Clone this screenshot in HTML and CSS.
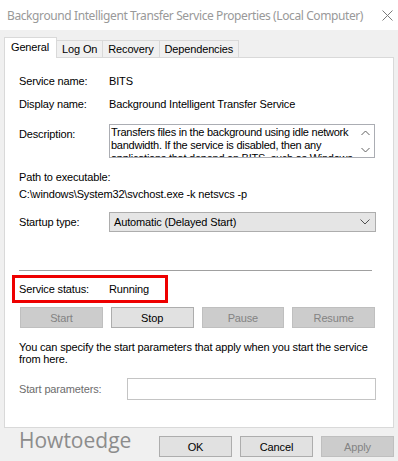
FILE: index.html
```html
<!DOCTYPE html>
<html lang="en">
<head>
    <meta charset="UTF-8">
    <title>Background Intelligent Transfer Service Properties (Local Computer)</title>
    <link rel="stylesheet" href="styles.css">
</head>
<body>
    <div class="window">
        <div class="titlebar">
            <span class="title">Background Intelligent Transfer Service Properties (Local Computer)</span>
            <svg class="close" width="11" height="11" viewBox="0 0 11 11">
                <path d="M0.5 0.5L10.5 10.5M10.5 0.5L0.5 10.5" stroke="#7a7a7a" stroke-width="1" fill="none"/>
            </svg>
        </div>

        <div class="tabs">
            <div class="tab active">General</div>
            <div class="tab">Log On</div>
            <div class="tab">Recovery</div>
            <div class="tab">Dependencies</div>
        </div>

        <div class="panel">
            <div class="row">
                <span class="label">Service name:</span>
                <span>BITS</span>
            </div>
            <div class="row row-gap">
                <span class="label">Display name:</span>
                <span>Background Intelligent Transfer Service</span>
            </div>
            <div class="row row-desc">
                <span class="label label-desc">Description:</span>
                <div class="textbox">
                    <div class="textbox-text">Transfers files in the background using idle network<br>bandwidth. If the service is disabled, then any<br>applications that depend on BITS, such as Windows</div>
                    <div class="scroll">
                        <svg width="9" height="6" viewBox="0 0 9 6"><path d="M0.5 5L4.5 1L8.5 5" stroke="#606060" fill="none"/></svg>
                        <svg width="9" height="6" viewBox="0 0 9 6"><path d="M0.5 1L4.5 5L8.5 1" stroke="#606060" fill="none"/></svg>
                    </div>
                </div>
            </div>

            <div class="path-label">Path to executable:</div>
            <div class="path">C:\windows\System32\svchost.exe -k netsvcs -p</div>

            <div class="row row-startup">
                <span class="label">Startup type:</span>
                <div class="combo">
                    <span>Automatic (Delayed Start)</span>
                    <svg width="10" height="6" viewBox="0 0 10 6"><path d="M0.5 0.5L5 5L9.5 0.5" stroke="#505050" fill="none"/></svg>
                </div>
            </div>

            <div class="separator"></div>

            <div class="row status">
                <span class="label">Service status:</span>
                <span>Running</span>
            </div>

            <div class="service-buttons">
                <button class="btn" disabled>Start</button>
                <button class="btn">Stop</button>
                <button class="btn" disabled>Pause</button>
                <button class="btn" disabled>Resume</button>
            </div>

            <p class="hint">You can specify the start parameters that apply when you start the service<br>from here.</p>

            <div class="row row-params">
                <span class="label label-params">Start parameters:</span>
                <div class="param-input"></div>
            </div>
        </div>

        <div class="footer">
            <span class="watermark">Howtoedge</span>
            <div class="footer-buttons">
                <button class="btn">OK</button>
                <button class="btn">Cancel</button>
                <button class="btn" disabled>Apply</button>
            </div>
        </div>
    </div>
</body>
</html>
```

FILE: styles.css
```css
* {
    box-sizing: border-box;
}

body {
    margin: 0;
    background-color: #f0f0f0;
    color: #000;
    font-family: "Liberation Sans", Arial, sans-serif;
    font-size: 11px;
    letter-spacing: -0.15px;
}

.window {
    width: 398px;
    height: 461px;
    overflow: hidden;
}

/* Title bar */
.titlebar {
    height: 30px;
    background-color: #fff;
    display: flex;
    align-items: center;
    padding: 0 5px 0 7px;
}

.title {
    font-family: "Noto Sans", sans-serif;
    font-size: 12px;
    letter-spacing: -0.4px;
    color: #999;
    white-space: nowrap;
}

.close {
    margin-left: auto;
}

/* Tabs */
.tabs {
    display: flex;
    align-items: flex-end;
    height: 21px;
    margin: 7px 0 -1px 4px;
}

.tab {
    height: 18px;
    padding: 2px 5px 0;
    line-height: 13px;
    border: 1px solid #d9d9d9;
    border-left: none;
    background-color: #f0f0f0;
}

.tab.active {
    height: 21px;
    padding: 3px 7px 0 6px;
    border-left: 1px solid #d9d9d9;
    border-bottom: none;
    background-color: #fff;
    position: relative;
    z-index: 1;
}

/* Panel */
.panel {
    margin: 0 4px;
    height: 371px;
    padding: 17px 18px 0 14px;
    background-color: #fff;
    border: 1px solid #d9d9d9;
}

.row {
    display: flex;
    align-items: center;
    line-height: 13px;
}

.label {
    width: 90px;
    flex: none;
}

.row-gap {
    margin-top: 10px;
}

.row-desc {
    margin-top: 13px;
    align-items: flex-start;
}

.label-desc {
    margin-top: 4px;
}

.textbox {
    flex: 1;
    min-width: 0;
    height: 34px;
    display: flex;
    border: 1px solid #abadb3;
}

.textbox-text {
    flex: 1;
    min-width: 0;
    padding: 1px 0 0 1px;
    overflow: hidden;
    white-space: nowrap;
    letter-spacing: -0.25px;
}

.scroll {
    width: 18px;
    flex: none;
    display: flex;
    flex-direction: column;
    align-items: center;
    justify-content: space-between;
    padding: 5px 0 4px;
}

.path-label {
    margin-top: 13px;
    line-height: 13px;
}

.path {
    margin-top: 4px;
    line-height: 13px;
}

.row-startup {
    margin-top: 11px;
}

.combo {
    flex: 1;
    height: 20px;
    margin-right: -1px;
    display: flex;
    align-items: center;
    justify-content: space-between;
    padding: 0 5px 0 4px;
    background-color: #e5e5e5;
    border: 1px solid #adadad;
}

.separator {
    margin: 38px 3px 0 0;
    border-top: 1px solid #a0a0a0;
}

.status {
    width: 156px;
    height: 28px;
    margin: 4px 0 0 -7px;
    padding-left: 4px;
    border: 3px solid #ee0000;
}

.service-buttons {
    display: grid;
    grid-template-columns: repeat(4, 1fr);
    gap: 8px;
    margin: 4px 0 0 1px;
}

.btn {
    height: 21px;
    padding: 0;
    font-family: inherit;
    font-size: 11px;
    letter-spacing: inherit;
    color: #000;
    background-color: #e1e1e1;
    border: 1px solid #adadad;
    border-radius: 0;
}

.btn:disabled {
    color: #838383;
    background-color: #cccccc;
    border-color: #bfbfbf;
}

.hint {
    margin: 13px 0 0;
    line-height: 12px;
    white-space: nowrap;
}

.row-params {
    margin-top: 13px;
}

.label-params {
    width: 108px;
    color: #6d6d6d;
}

.param-input {
    flex: 1;
    height: 22px;
    margin-right: -1px;
    border: 1px solid #c4c4c4;
}

/* Bottom buttons */
.footer {
    display: flex;
    align-items: flex-start;
    height: 32px;
    padding: 0 4px 0 19px;
}

.watermark {
    font-family: "Open Sans", sans-serif;
    font-size: 21px;
    line-height: 24px;
    letter-spacing: 0;
    color: #8c8c8c;
}

.footer-buttons {
    margin: 8px 0 0 auto;
    display: flex;
    gap: 8px;
}

.footer-buttons .btn {
    width: 73px;
}
```
